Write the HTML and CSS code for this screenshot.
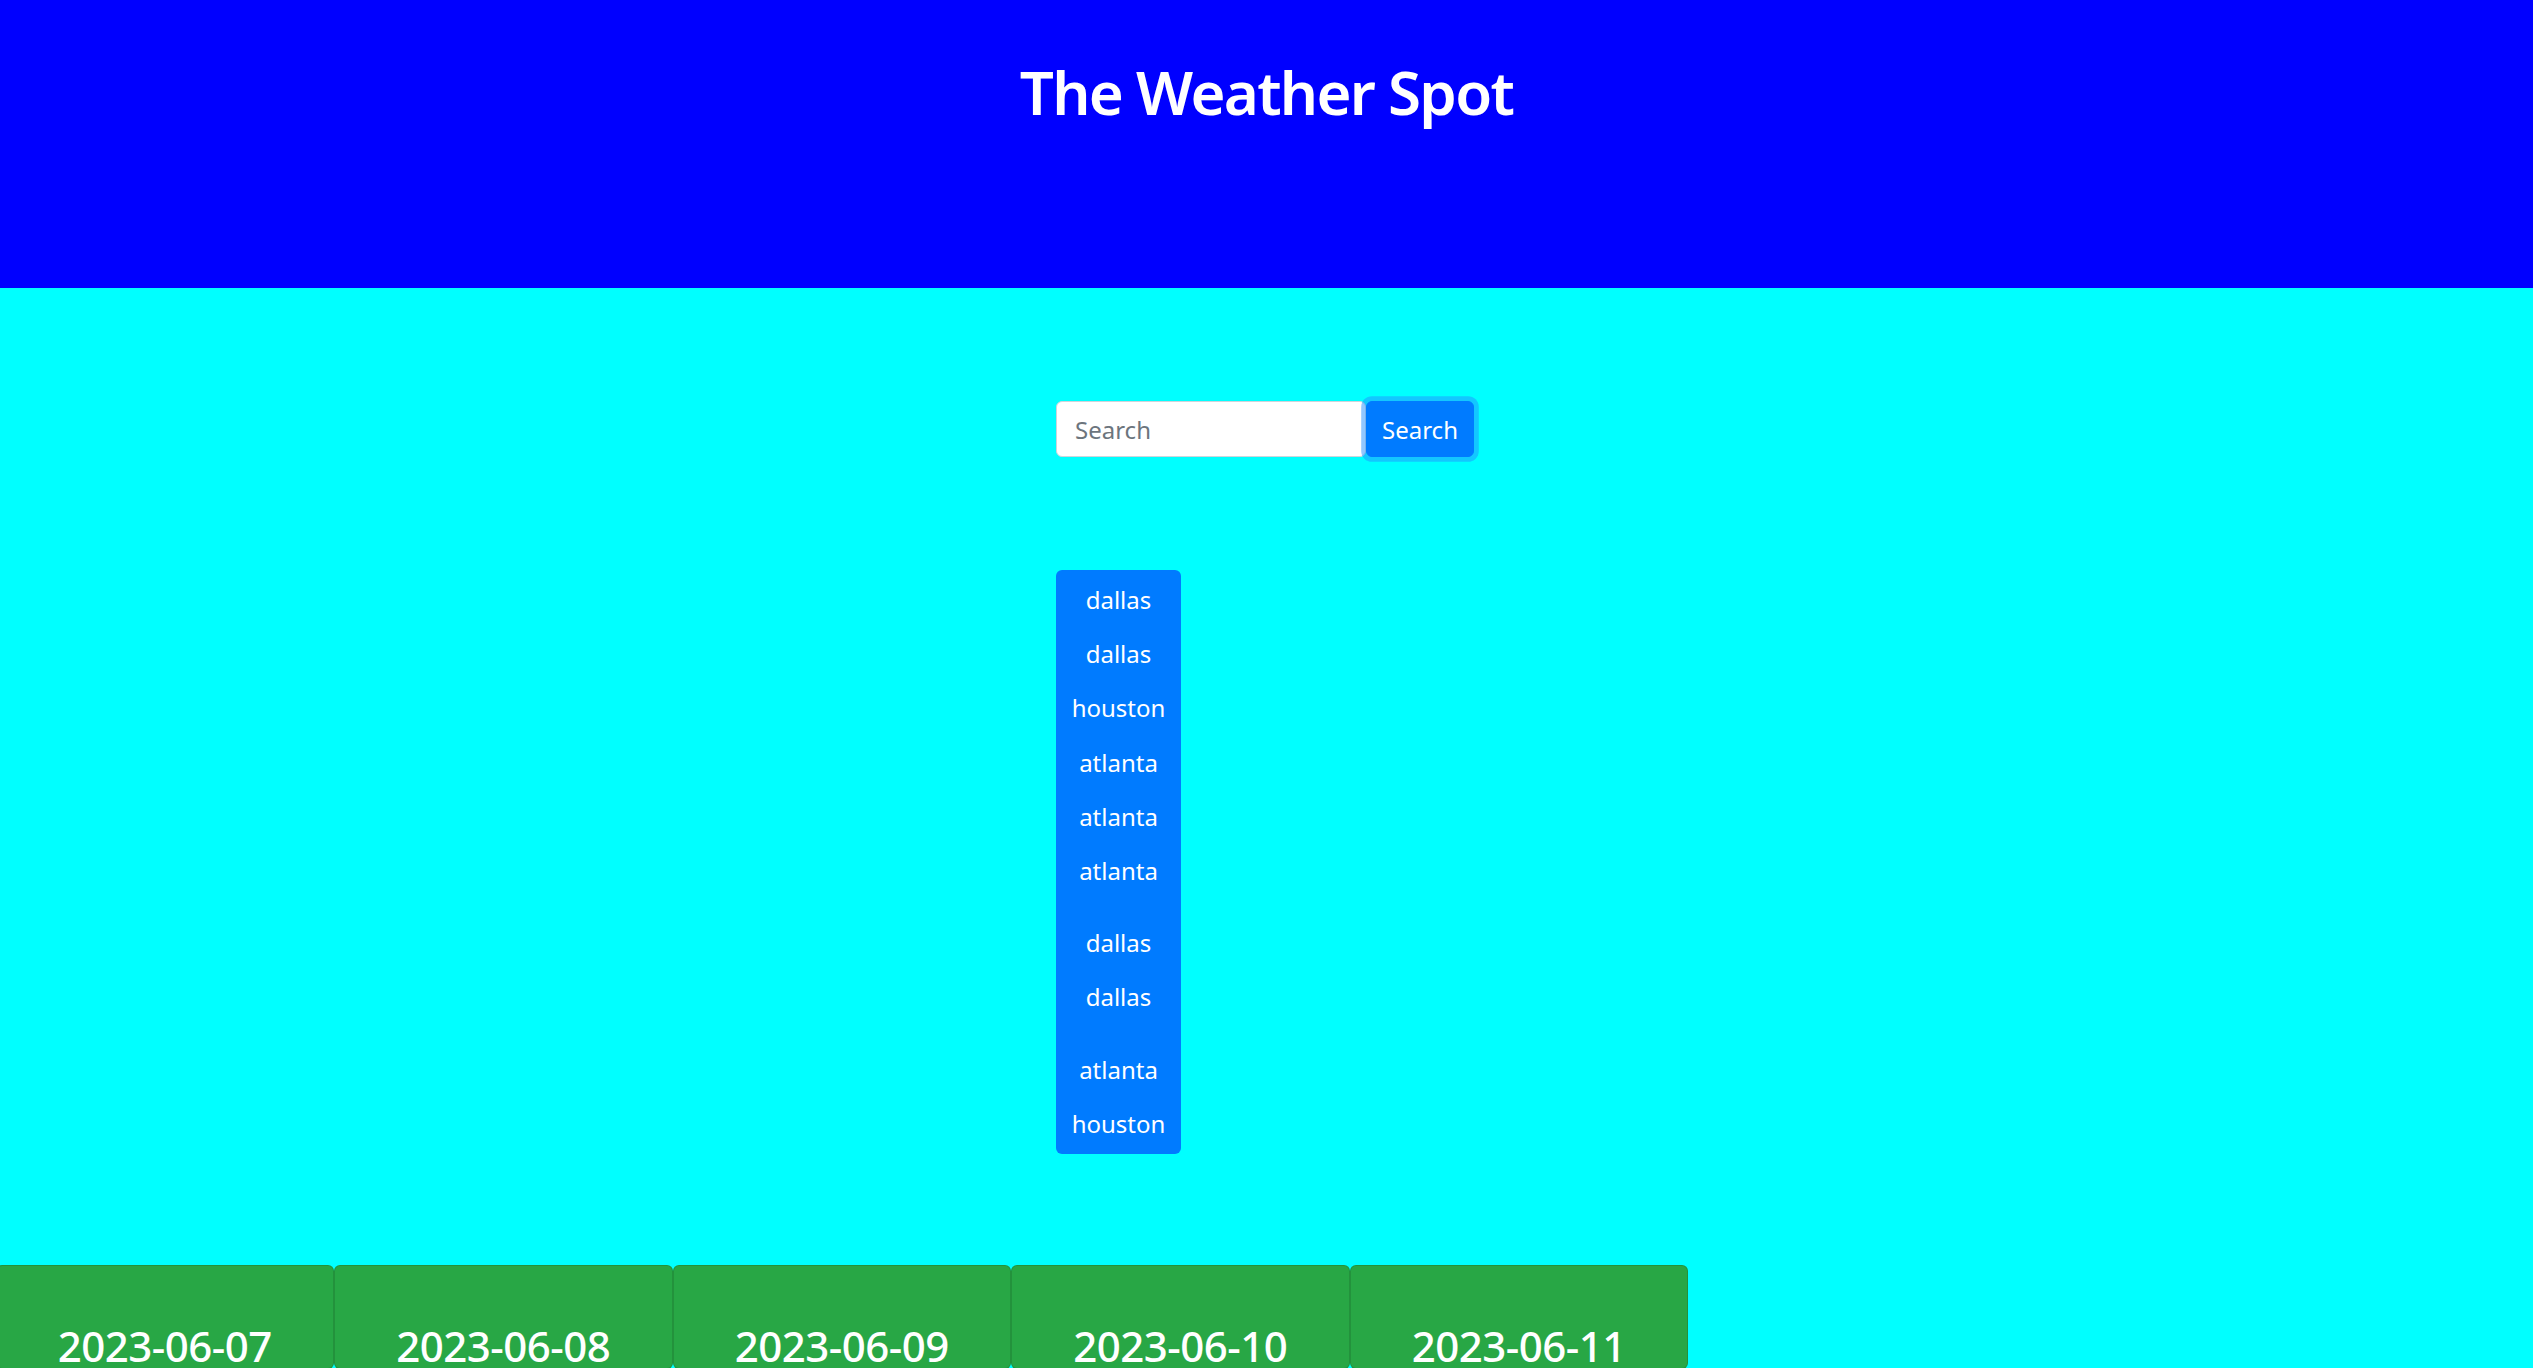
FILE: index.html
```html
<!DOCTYPE html>
<html lang="en">
<head>
<meta charset="utf-8">
<title>The Weather Spot</title>
<link rel="stylesheet" href="styles.css">
</head>
<body>
<header class="site-header">
  <h1 class="site-title">The Weather Spot</h1>
</header>
<main class="main">
  <div class="search-area">
    <form class="search-form">
      <input class="search-input" type="text" placeholder="Search">
      <button class="search-btn" type="button">Search</button>
    </form>
    <div class="history">
      <button class="history-item">dallas</button>
      <button class="history-item">dallas</button>
      <button class="history-item">houston</button>
      <button class="history-item">atlanta</button>
      <button class="history-item">atlanta</button>
      <button class="history-item">atlanta</button>
      <button class="history-item spaced">dallas</button>
      <button class="history-item">dallas</button>
      <button class="history-item spaced">atlanta</button>
      <button class="history-item">houston</button>
    </div>
  </div>
  <section class="forecast">
    <div class="card"><h3 class="card-date">2023-06-07</h3></div>
    <div class="card"><h3 class="card-date">2023-06-08</h3></div>
    <div class="card"><h3 class="card-date">2023-06-09</h3></div>
    <div class="card"><h3 class="card-date">2023-06-10</h3></div>
    <div class="card"><h3 class="card-date">2023-06-11</h3></div>
  </section>
</main>
</body>
</html>
```

FILE: styles.css
```css
html, body {
  margin: 0;
  padding: 0;
}
body {
  font-family: "Noto Sans", "Open Sans", sans-serif;
  font-size: 24px;
  background: #00ffff;
  color: #212529;
  overflow: hidden;
}
.site-header {
  background: #0000ff;
  height: 288px;
  padding-top: 56px;
  box-sizing: border-box;
}
.site-title {
  margin: 0;
  text-align: center;
  color: #ffffff;
  font-size: 60px;
  font-weight: 600;
  letter-spacing: -1.7px;
  line-height: 72px;
}
.main {
  padding-top: 113px;
}
.search-area {
  width: 418px;
  margin: 0 auto;
  position: relative;
  left: -1.5px;
}
.search-form {
  display: flex;
  margin: 0;
}
.search-input {
  width: 310px;
  height: 56px;
  box-sizing: border-box;
  border: 1.5px solid #ced4da;
  border-radius: 6px;
  padding: 0 18px;
  font-family: inherit;
  font-size: 24px;
  color: #495057;
  background: #fff;
  outline: none;
}
.search-input::placeholder {
  color: #6c757d;
}
.search-btn {
  width: 108px;
  height: 56px;
  box-sizing: border-box;
  border: 1.5px solid #007bff;
  border-radius: 6px;
  background: #007bff;
  color: #fff;
  font-family: inherit;
  font-size: 24px;
  padding: 0;
  box-shadow: 0 0 0 4.8px rgba(38, 143, 255, 0.5);
}
.history {
  margin-top: 113px;
  width: 125px;
  background: #007bff;
  border-radius: 6px;
  padding: 3px 0 3px;
  display: flex;
  flex-direction: column;
}
.history-item {
  height: 54.2px;
  border: 0;
  background: transparent;
  color: #fff;
  font-family: inherit;
  font-size: 24px;
  line-height: 36px;
  padding: 0;
  text-align: center;
}
.history-item.spaced {
  margin-top: 18px;
}
.forecast {
  display: flex;
  margin-top: 111px;
  margin-left: -4.5px;
}
.card {
  width: 338.5px;
  height: 104px;
  box-sizing: border-box;
  background: #28a745;
  border: 1.5px solid rgba(0, 0, 0, 0.125);
  border-radius: 6px;
  overflow: hidden;
  padding-top: 55px;
}
.card-date {
  margin: 0;
  text-align: center;
  color: #fff;
  font-size: 42px;
  font-weight: 500;
  letter-spacing: -0.5px;
  line-height: 50.4px;
}
```
